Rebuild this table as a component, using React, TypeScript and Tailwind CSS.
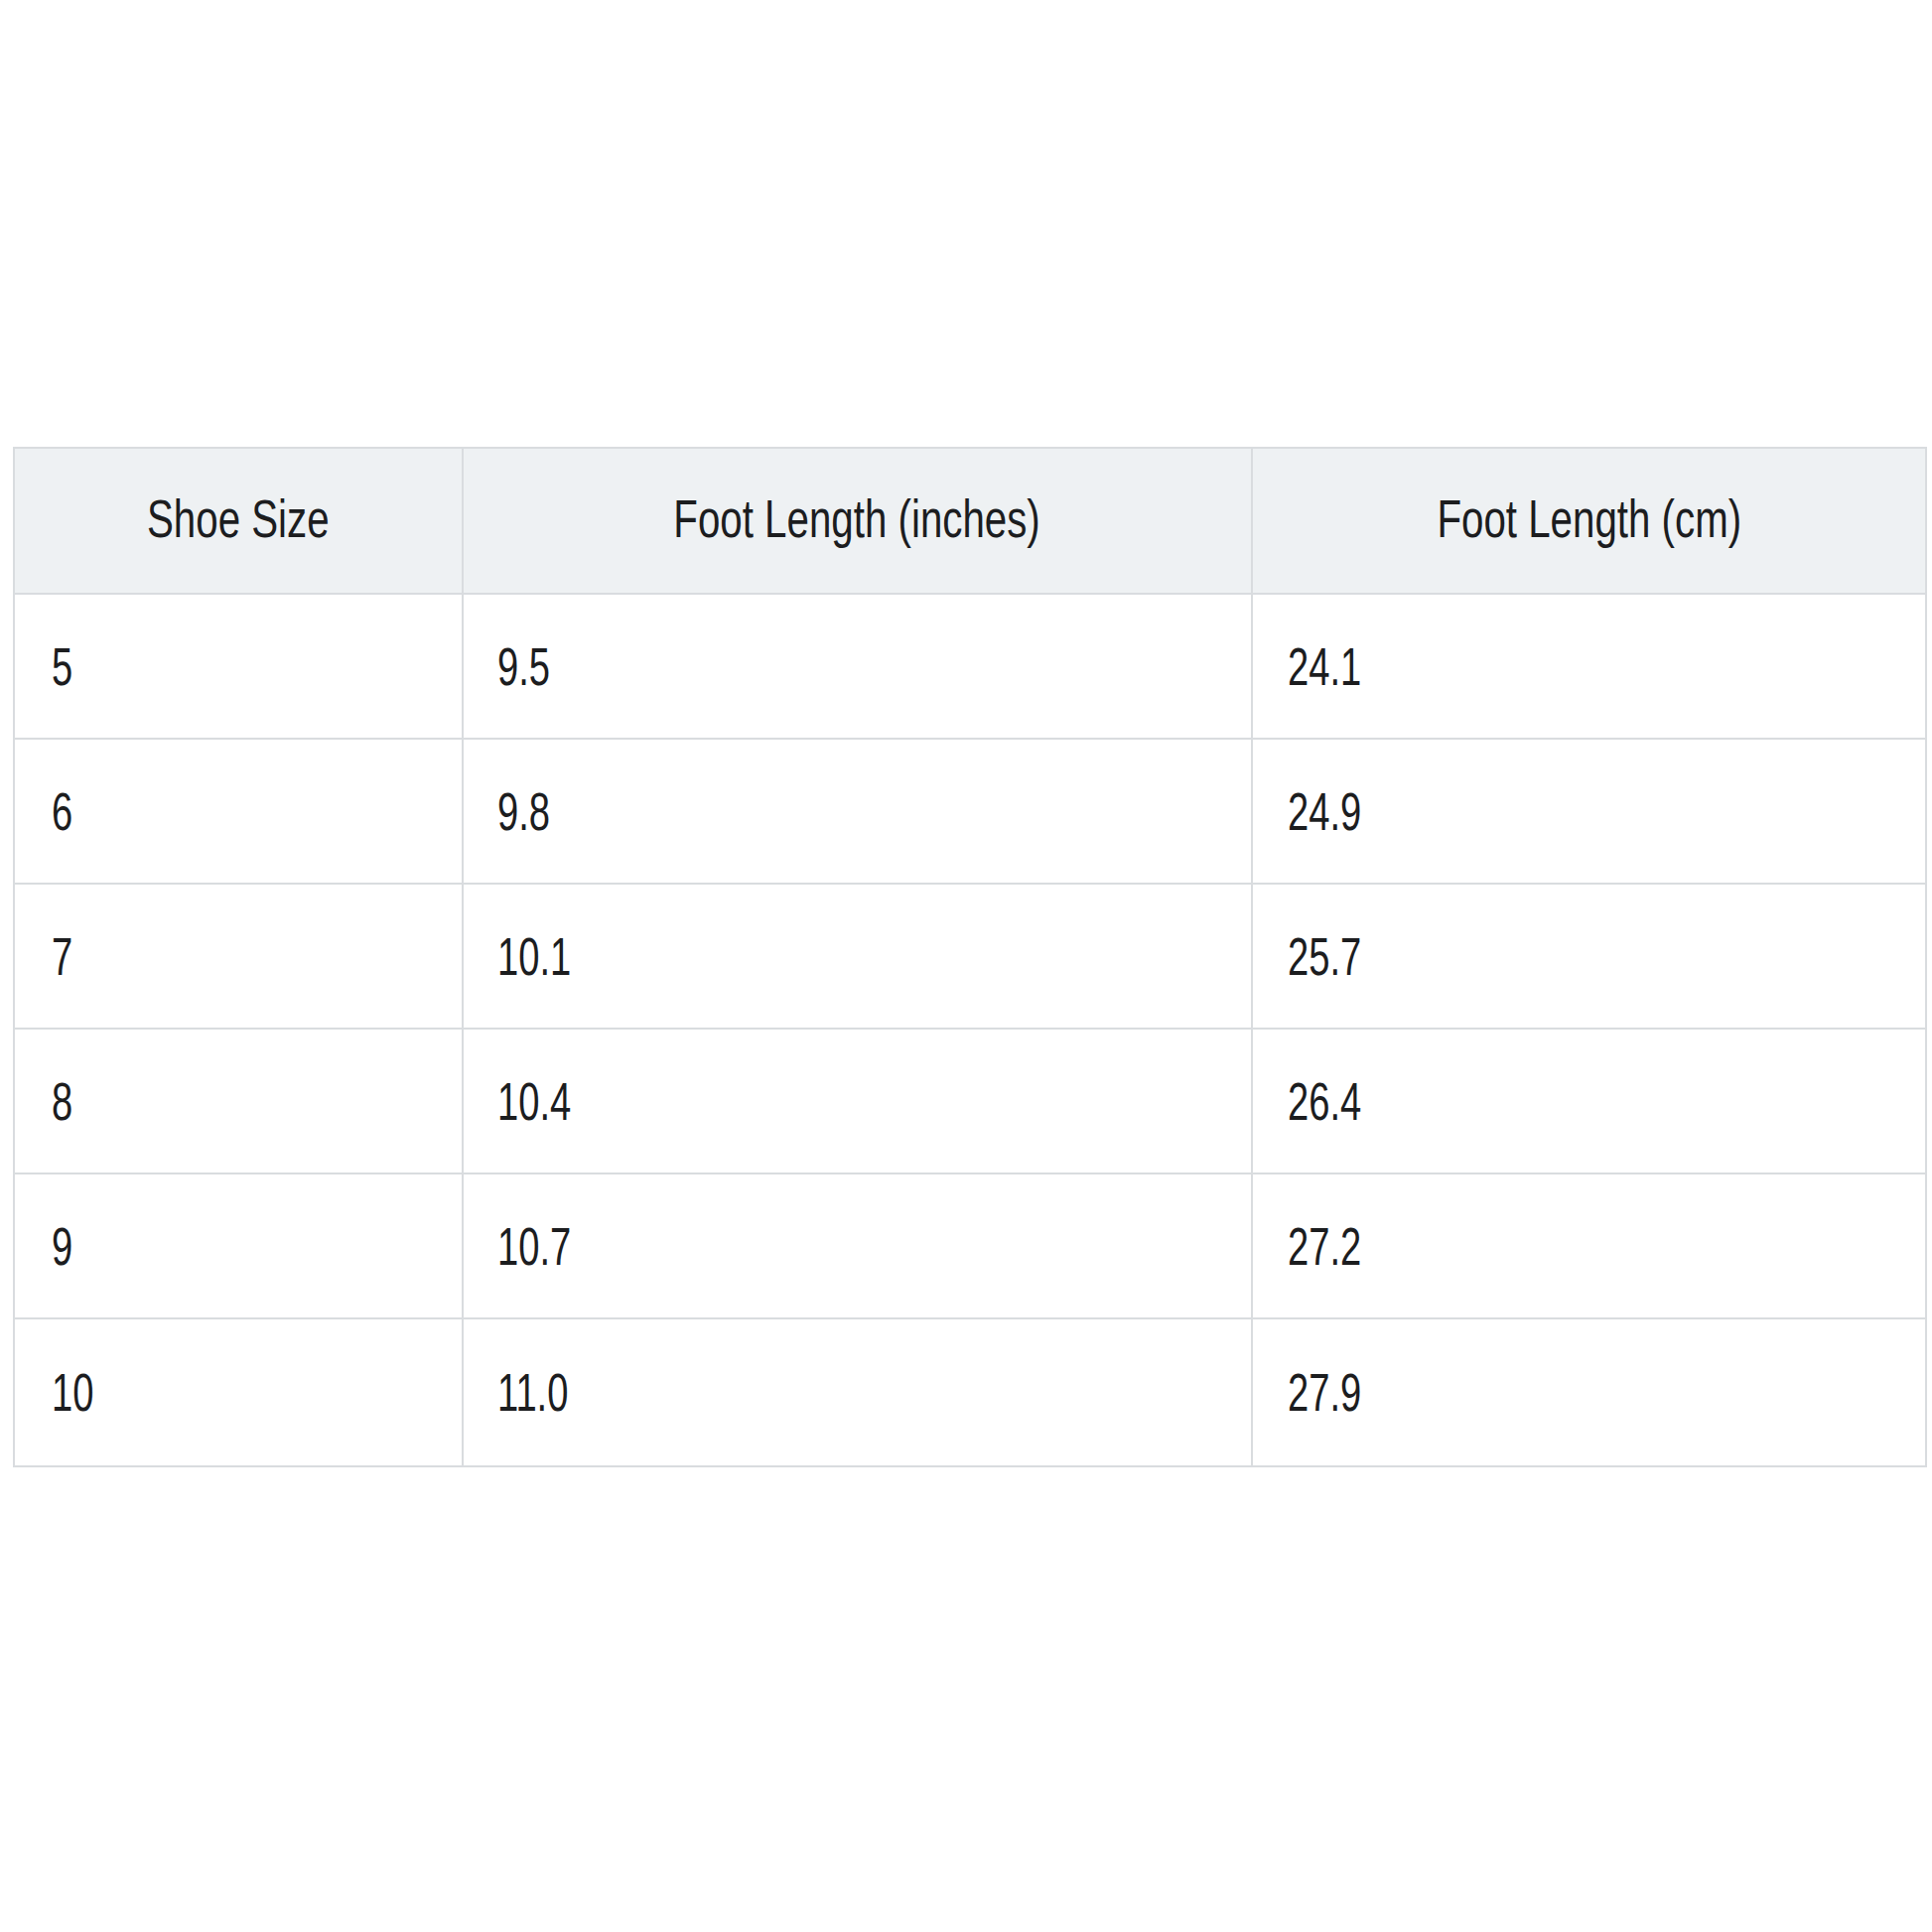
import React from "react";

const rows: [string, string, string][] = [
  ["5", "9.5", "24.1"],
  ["6", "9.8", "24.9"],
  ["7", "10.1", "25.7"],
  ["8", "10.4", "26.4"],
  ["9", "10.7", "27.2"],
  ["10", "11.0", "27.9"],
];

function H({ children }: { children: React.ReactNode }) {
  return (
    <span className="inline-block whitespace-nowrap scale-x-[0.76] origin-center">
      {children}
    </span>
  );
}

function D({ children }: { children: React.ReactNode }) {
  return (
    <span className="inline-block whitespace-nowrap scale-x-[0.72] origin-left">
      {children}
    </span>
  );
}

export default function App() {
  return (
    <div
      className="w-[1946px] h-[1946px] bg-white text-[#1c1d1f] text-[53px] leading-none"
      style={{ fontFamily: '"Liberation Sans", Arial, sans-serif' }}
    >
      <div className="pt-[450px] pl-[13px]">
        <div className="w-[1928px] border-2 border-[#d9dcdf]">
          <div className="flex h-[147px] bg-[#eef1f3] border-b-2 border-[#d9dcdf]">
            <div className="w-[452px] border-r-2 border-[#d9dcdf] flex items-center justify-center pb-[4px]">
              <H>Shoe Size</H>
            </div>
            <div className="w-[795px] border-r-2 border-[#d9dcdf] flex items-center justify-center pb-[4px]">
              <H>Foot Length (inches)</H>
            </div>
            <div className="flex-1 flex items-center justify-center pb-[4px]">
              <H>Foot Length (cm)</H>
            </div>
          </div>
          {rows.map((r, i) => (
            <div
              key={i}
              className={
                i < rows.length - 1
                  ? "flex h-[146px] border-b-2 border-[#d9dcdf]"
                  : "flex h-[147px]"
              }
            >
              <div className="w-[452px] border-r-2 border-[#d9dcdf] flex items-center pl-[37px]">
                <D>{r[0]}</D>
              </div>
              <div className="w-[795px] border-r-2 border-[#d9dcdf] flex items-center pl-[34px]">
                <D>{r[1]}</D>
              </div>
              <div className="flex-1 flex items-center pl-[35px]">
                <D>{r[2]}</D>
              </div>
            </div>
          ))}
        </div>
      </div>
    </div>
  );
}
